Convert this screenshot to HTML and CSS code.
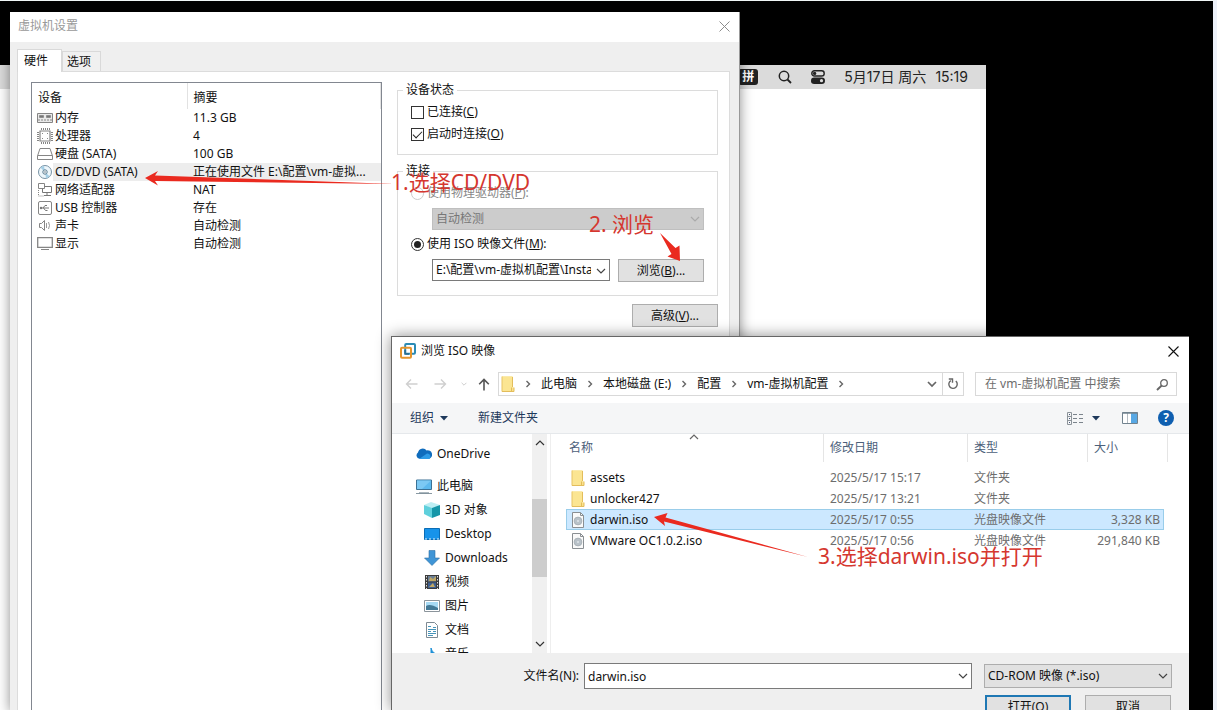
FILE: index.html
```html
<!DOCTYPE html>
<html lang="zh-CN">
<head>
<meta charset="utf-8">
<title>虚拟机设置</title>
<link rel="stylesheet" href="styles.css">
</head>
<body>
<svg class="defs" width="0" height="0" aria-hidden="true">
  <symbol id="chev" viewBox="0 0 10 10"><path d="M1 3l4 4 4-4" fill="none" stroke="currentColor" stroke-width="1.2"/></symbol>
  <symbol id="crumb" viewBox="0 0 6 10"><path d="M1.5 2l3 3-3 3" fill="none" stroke="#666" stroke-width="1.4"/></symbol>
  <symbol id="tri" viewBox="0 0 8 5"><path d="M0 0h8L4 4.5z" fill="currentColor"/></symbol>
  <symbol id="folder" viewBox="0 0 14 16"><path d="M1 .5h10.5v11H13v4H1z" fill="#f9e08a"/><path d="M1 .5h10.5v15H1z" fill="#fbe592"/><path d="M.5 .5h1v15h-1z" fill="#e8c465"/><path d="M10.5 11.5v4h2.5v-4M1 15.5h12M11.5 1v10" fill="none" stroke="#e3bd5b"/></symbol>
  <symbol id="iso" viewBox="0 0 14 16"><path d="M1.5.5h8l3 3v12h-11z" fill="#fafafa" stroke="#8a8f93"/><path d="M9.500.5v3h3" fill="none" stroke="#8a8f93"/><circle cx="7" cy="9" r="3.900" fill="#b9c2c9" stroke="#a3acb3" stroke-width=".8"/><circle cx="7" cy="9" r="1" fill="#dfe4e8"/></symbol>
</svg>

<main class="desktop">
  <section class="guest" aria-label="macOS">
    <div class="menubar">
      <span class="ime">拼</span>
      <svg width="14" height="14" viewBox="0 0 14 14"><circle cx="6" cy="6" r="4.700" fill="none" stroke="#222" stroke-width="1.500"/><path d="M9.500 9.500l3.500 3.500" stroke="#222" stroke-width="1.800"/></svg>
      <svg width="14" height="14" viewBox="0 0 14 14"><rect x=".8" y=".8" width="12.400" height="5.200" rx="2.600" fill="none" stroke="#222" stroke-width="1.400"/><circle cx="3.600" cy="3.400" r="1.700" fill="#222"/><rect y="7.500" width="14" height="6.500" rx="3.200" fill="#222"/><circle cx="10.500" cy="10.700" r="1.600" fill="#dcdcdc"/></svg>
      <time class="clock"><span>5月17日 周六</span><span>15:19</span></time>
    </div>
  </section>

  <section class="window settings" aria-label="虚拟机设置">
    <header class="settings-title">
      <span>虚拟机设置</span>
      <button class="icon-btn" aria-label="关闭"><svg width="11" height="11" viewBox="0 0 11 11"><path d="M.5.5l10 10M10.500.5l-10 10" stroke="#8c8c8c"/></svg></button>
    </header>
    <div class="settings-body">
      <div class="tabs"><button class="tab active">硬件</button><button class="tab">选项</button></div>
      <div class="tabpage">
        <div class="devices">
          <table class="device-table">
            <thead><tr><th class="dcol">设备</th><th>摘要</th></tr></thead>
            <tbody>
              <tr><td><div class="dev"><svg width="16" height="16" viewBox="0 0 16 16"><path d="M.5 3.500h15v9H.5z" fill="#e9e9e9" stroke="#858585"/><path d="M2.500 5.500h4v2h-4zM9.500 5.500h4v2h-4z" fill="#777" stroke="#777" stroke-width=".6"/><path d="M1 10h14" stroke="#858585" stroke-dasharray="2 1"/></svg><span>内存</span></div></td><td>11.3 GB</td></tr>
              <tr><td><div class="dev"><svg width="16" height="16" viewBox="0 0 16 16"><path d="M3 3h10v10H3z" fill="#fff" stroke="#858585" stroke-width="1.200"/><path d="M4 1h9M4 15h9" stroke="#858585" stroke-width="2" stroke-dasharray="1 1"/><path d="M1 4v9M15 4v9" stroke="#858585" stroke-width="2" stroke-dasharray="1 1"/><path d="M5 5h1v1H5zM10 5h1v1h-1zM10 10h1v1h-1zM5 10h1v1H5z" fill="#888"/></svg><span>处理器</span></div></td><td>4</td></tr>
              <tr><td><div class="dev"><svg width="16" height="16" viewBox="0 0 16 16"><path d="M3 2.500h10l2.500 7.500v3.500H.5V10z" fill="#fff" stroke="#858585"/><path d="M1 9.500h14" stroke="#858585"/></svg><span>硬盘 (SATA)</span></div></td><td>100 GB</td></tr>
              <tr class="sel"><td><div class="dev"><svg width="16" height="16" viewBox="0 0 16 16"><circle cx="8" cy="8" r="6.500" fill="#edf6fb" stroke="#7893a5"/><path d="M8 8L3.500 3.800A6 6 0 0 1 7 2zM8 8l4.500 4.200A6 6 0 0 1 9 14z" fill="#a5cfe6"/><circle cx="8" cy="8" r="2.200" fill="#fff" stroke="#55788e"/><circle cx="8" cy="8" r=".7" fill="#35586e"/></svg><span>CD/DVD (SATA)</span></div></td><td>正在使用文件 E:\配置\vm-虚拟...</td></tr>
              <tr><td><div class="dev"><svg width="16" height="16" viewBox="0 0 16 16"><path d="M1.500 1.500h6v5h-6z" fill="none" stroke="#858585"/><path d="M7.500 4.500h7v6h-9v-4M10 10.500v3M7 13.500h7" fill="none" stroke="#777"/><path d="M1.500 8v6h5" fill="none" stroke="#858585" stroke-dasharray="1 1"/></svg><span>网络适配器</span></div></td><td>NAT</td></tr>
              <tr><td><div class="dev"><svg width="16" height="16" viewBox="0 0 16 16"><rect x="1.500" y="1.500" width="13" height="13" rx="1.500" fill="#fff" stroke="#858585"/><path d="M4 8h8M6 8l2-2.500h2M6.500 8l2 2.500h2" fill="none" stroke="#777"/><circle cx="4" cy="8" r="1.200" fill="#777"/></svg><span>USB 控制器</span></div></td><td>存在</td></tr>
              <tr><td><div class="dev"><svg width="16" height="16" viewBox="0 0 16 16"><path d="M2.500 5.500h2l3-3v10l-3-3h-2z" fill="#fff" stroke="#858585"/><path d="M9.500 5v5M11.500 4q2 3.500 0 7" fill="none" stroke="#999"/></svg><span>声卡</span></div></td><td>自动检测</td></tr>
              <tr><td><div class="dev"><svg width="16" height="16" viewBox="0 0 16 16"><path d="M.7 1.700h14.600v9.600H.7z" fill="#fff" stroke="#858585" stroke-width="1.300"/><path d="M4 13.500h8" stroke="#858585"/></svg><span>显示</span></div></td><td>自动检测</td></tr>
            </tbody>
          </table>
        </div>
        <form class="options">
          <fieldset>
            <legend>设备状态</legend>
            <label class="opt"><input type="checkbox"><span>已连接(<u>C</u>)</span></label>
            <label class="opt"><input type="checkbox" checked><span>启动时连接(<u>O</u>)</span></label>
          </fieldset>
          <fieldset class="conn">
            <legend>连接</legend>
            <label class="opt off"><input type="radio" name="src" disabled><span>使用物理驱动器(<u>P</u>):</span></label>
            <div class="combo drive"><select disabled aria-label="物理驱动器"><option>自动检测</option></select><svg width="10" height="10"><use href="#chev"/></svg></div>
            <label class="opt"><input type="radio" name="src" checked><span>使用 ISO 映像文件(<u>M</u>):</span></label>
            <div class="isorow">
              <div class="combo path"><select aria-label="ISO 映像文件"><option>E:\配置\vm-虚拟机配置\Install</option></select><svg width="10" height="10"><use href="#chev"/></svg></div>
              <button type="button" class="btn">浏览(<u>B</u>)...</button>
            </div>
          </fieldset>
          <button type="button" class="btn adv">高级(<u>V</u>)...</button>
        </form>
      </div>
    </div>
  </section>

  <section class="window dialog" aria-label="浏览 ISO 映像">
    <header class="dialog-title">
      <svg width="16" height="16" viewBox="0 0 16 16"><rect x="5.200" y="1" width="9.800" height="9.800" rx="1" fill="none" stroke="#2b8bb5" stroke-width="2"/><rect x="1" y="4.700" width="10" height="10" rx="1" fill="none" stroke="#e5952c" stroke-width="2"/><path d="M5.200 7V10.800H9" fill="none" stroke="#2b6f93" stroke-width="1.800"/></svg>
      <h1>浏览 ISO 映像</h1>
      <button class="icon-btn" aria-label="关闭"><svg width="11" height="11" viewBox="0 0 11 11"><path d="M.5.5l10 10M10.500.5l-10 10" stroke="#111" stroke-width="1.100"/></svg></button>
    </header>
    <nav class="navbar">
      <div class="history">
        <button class="icon-btn" aria-label="后退" disabled><svg width="13" height="12" viewBox="0 0 13 12"><path d="M12.500 6H1.500M6 1.500L1.500 6 6 10.500" fill="none" stroke="#cfcfcf" stroke-width="1.400"/></svg></button>
        <button class="icon-btn" aria-label="前进" disabled><svg width="13" height="12" viewBox="0 0 13 12"><path d="M.5 6h11M7 1.500L11.500 6 7 10.500" fill="none" stroke="#cfcfcf" stroke-width="1.400"/></svg></button>
        <button class="icon-btn" aria-label="最近" disabled><svg class="pale" width="6" height="6"><use href="#chev"/></svg></button>
        <button class="icon-btn" aria-label="向上"><svg width="12" height="13" viewBox="0 0 12 13"><path d="M6 12.500V1.500M1.200 6.300L6 1.500l4.800 4.800" fill="none" stroke="#555" stroke-width="1.600"/></svg></button>
      </div>
      <div class="address">
        <svg width="14" height="16"><use href="#folder"/></svg>
        <svg width="6" height="10"><use href="#crumb"/></svg>
        <a href="#pc">此电脑</a>
        <svg width="6" height="10"><use href="#crumb"/></svg>
        <a href="#e">本地磁盘 (E:)</a>
        <svg width="6" height="10"><use href="#crumb"/></svg>
        <a href="#cfg">配置</a>
        <svg width="6" height="10"><use href="#crumb"/></svg>
        <a href="#vm">vm-虚拟机配置</a>
        <svg width="6" height="10"><use href="#crumb"/></svg>
        <button class="icon-btn drop" aria-label="展开"><svg width="10" height="10" viewBox="0 0 10 10"><path d="M1 3l4 4 4-4" fill="none" stroke="#666" stroke-width="1.700"/></svg></button>
        <button class="icon-btn refresh" aria-label="刷新"><svg width="12" height="12" viewBox="0 0 12 12"><path d="M8.800 3A4.200 4.200 0 1 1 3.800 2.600" fill="none" stroke="#666" stroke-width="1.400"/><path d="M1.800 1h3.700v3.700" fill="none" stroke="#666" stroke-width="1.400"/></svg></button>
      </div>
      <div class="search">
        <input type="text" aria-label="搜索" placeholder="在 vm-虚拟机配置 中搜索">
        <svg width="13" height="13" viewBox="0 0 13 13"><circle cx="8" cy="5" r="3.300" fill="none" stroke="#666" stroke-width="1.300"/><path d="M5.700 7.500L1 12" stroke="#666" stroke-width="1.900"/></svg>
      </div>
    </nav>
    <div class="toolbar">
      <button class="tool">组织<svg width="8" height="5"><use href="#tri"/></svg></button>
      <button class="tool">新建文件夹</button>
      <span class="spacer"></span>
      <button class="tool view" aria-label="视图"><svg width="17" height="13" viewBox="0 0 17 13"><path d="M.5.5h4v12h-4zM.5 4.500h4M.5 8.500h4" fill="none" stroke="#8d949a"/><path d="M2 2.500h1M2 6.500h1M2 10.500h1" stroke="#457"/><path d="M6 2.500h4M12 2.500h4M6 6.500h4M12 6.500h4M6 10.500h4M12 10.500h4" stroke="#7b848c"/></svg><svg width="8" height="5"><use href="#tri"/></svg></button>
      <button class="tool pane" aria-label="预览窗格"><svg width="16" height="12" viewBox="0 0 16 12"><path d="M.5.5h15v11H.5z" fill="#fff" stroke="#71828e"/><path d="M9 1h6v10H9z" fill="#58a8e4"/><path d="M5.500 1v10" stroke="#b5bcc2"/><path d="M.5 1h15" stroke="#71828e" stroke-width="1.500"/></svg></button>
      <button class="help" aria-label="帮助">?</button>
    </div>
    <div class="content">
      <aside class="sidebar">
        <ul class="tree">
          <li class="root first"><svg width="16" height="16" viewBox="0 0 16 16"><path d="M3.500 12.800A3.500 3.500 0 0 1 2 6.500 4.800 4.800 0 0 1 10.600 4.500 4 4 0 0 1 13 12.800z" fill="#0f6cbd"/><path d="M3 13l8-5.500a3.200 3.200 0 0 1 2.500 5.500z" fill="#2e9be6"/></svg>OneDrive</li>
          <li class="root"><svg width="16" height="16" viewBox="0 0 16 16"><path d="M.5 2h15v9.500H.5z" fill="#5db9ee" stroke="#3c7194"/><path d="M1 2.500h14L6 11H1z" fill="#7cc9f4"/><path d="M3 14.800h10M0 15.500h16" stroke="#6b7f8b" stroke-width=".8"/></svg>此电脑</li>
          <li><svg width="16" height="16" viewBox="0 0 16 16"><path d="M0 3l7-3 9 3-7 4z" fill="#bdeef3"/><path d="M0 3l8 3v10l-8-4z" fill="#5fd0dc"/><path d="M16 3L8 6v10l8-3z" fill="#1596a8"/></svg>3D 对象</li>
          <li><svg width="16" height="16" viewBox="0 0 16 16"><path d="M.5 2.500h15v11H.5z" fill="#1793ea" stroke="#0b6db5"/><path d="M1 13h14" stroke="#eaf6ff" stroke-dasharray="2 2"/></svg>Desktop</li>
          <li><svg width="16" height="16" viewBox="0 0 16 16"><path d="M5 .5h6V8h4.500L8 15.500.5 8H5z" fill="#3f95d6" stroke="#2b6fa5" stroke-width=".6"/></svg>Downloads</li>
          <li><svg width="16" height="16" viewBox="0 0 16 16"><path d="M1 1h14v14H1z" fill="#3c3c3c"/><path d="M4 2h8v5.500H4z" fill="#6a7f96"/><path d="M4 8.500h8V14H4z" fill="#3e5f91"/><path d="M6 3l3 2 3-3v5H5zM7 11l2-2 2 4H5z" fill="#c0a866"/><path d="M2.500 2v13M13.500 2v13" stroke="#ddd" stroke-dasharray="1.500 1.500"/></svg>视频</li>
          <li><svg width="16" height="16" viewBox="0 0 16 16"><path d="M.5 2.500h15v11H.5z" fill="#fff" stroke="#8b949b"/><path d="M2 4h12v8H2z" fill="#a7daf4"/><path d="M2 8q4-3 12 2v2H2z" fill="#447a97"/></svg>图片</li>
          <li><svg width="16" height="16" viewBox="0 0 16 16"><path d="M2.500.5h8l3 3v12h-11z" fill="#fff" stroke="#7e8a93"/><path d="M4 4.500h3M9 5.500h3M4 7.500h8M4 9.500h3M9 9.500h3M4 11.500h8M4 13.500h5" stroke="#4694ba"/></svg>文档</li>
          <li><svg width="16" height="16" viewBox="0 0 16 16"><path d="M7 2q0 3 4.500 6-1 2-2-1L8.500 13H7z" fill="#1c8fd6" stroke="#1c8fd6"/><circle cx="6" cy="13" r="2.500" fill="#1c8fd6"/></svg>音乐</li>
        </ul>
        <div class="scroll"><svg class="flip" width="10" height="10"><use href="#chev"/></svg><span class="thumb"></span><svg width="10" height="10"><use href="#chev"/></svg></div>
      </aside>
      <div class="files">
        <table class="file-table">
          <thead><tr><th>名称<svg class="sort" width="10" height="10"><use href="#chev"/></svg></th><th class="c-date">修改日期</th><th class="c-type">类型</th><th class="c-size">大小</th></tr></thead>
          <tbody>
            <tr><td><div class="fname"><svg width="14" height="16"><use href="#folder"/></svg>assets</div></td><td>2025/5/17 15:17</td><td>文件夹</td><td></td></tr>
            <tr><td><div class="fname"><svg width="14" height="16"><use href="#folder"/></svg>unlocker427</div></td><td>2025/5/17 13:21</td><td>文件夹</td><td></td></tr>
            <tr class="sel"><td><div class="fname"><svg width="14" height="16"><use href="#iso"/></svg>darwin.iso</div></td><td>2025/5/17 0:55</td><td>光盘映像文件</td><td>3,328 KB</td></tr>
            <tr><td><div class="fname"><svg width="14" height="16"><use href="#iso"/></svg>VMware OC1.0.2.iso</div></td><td>2025/5/17 0:56</td><td>光盘映像文件</td><td>291,840 KB</td></tr>
          </tbody>
        </table>
      </div>
    </div>
    <footer class="footer">
      <label class="flabel" for="fname">文件名(N):</label>
      <div class="combo file"><input id="fname" type="text" value="darwin.iso"><svg width="10" height="10"><use href="#chev"/></svg></div>
      <div class="combo type"><select aria-label="文件类型"><option>CD-ROM 映像 (*.iso)</option></select><svg width="10" height="10"><use href="#chev"/></svg></div>
      <div class="actions"><button class="btn primary">打开(O)</button><button class="btn">取消</button></div>
    </footer>
  </section>

  <svg class="marks" width="1217" height="710" viewBox="0 0 1217 710" aria-hidden="true">
    <path d="M145 178l13-7-3 4.500L395 184l-240-3 3 4.500z" fill="#ea2a1f"/>
    <path d="M660 233l15.500 15 4-2.500 .5 15.500-12.500-4.500 4-2.500z" fill="#ea2a1f"/>
    <path d="M654 517l13.500-4-2 4.500L808 557 664 521.500l1 4.500z" fill="#ea2a1f"/>
  </svg>
  <p class="note n1">1.选择CD/DVD</p>
  <p class="note n2">2. 浏览</p>
  <p class="note n3">3.选择darwin.iso并打开</p>
</main>
</body>
</html>
```

FILE: styles.css
```css
* { box-sizing: border-box; }
body, button, input, select {
  font: 12px/16px "Noto Sans", "Noto Sans CJK SC", sans-serif;
  color: #111;
}
body { margin: 0; background: #edf1f9; }
button, input, select { margin: 0; }
p, h1, ul { margin: 0; padding: 0; }
svg { flex: none; display: block; }
.defs { position: absolute; }
.icon-btn { border: 0; padding: 0; background: none; display: flex; align-items: center; justify-content: center; }

.desktop {
  position: relative;
  height: 100vh;
  overflow: hidden;
  background: #000;
  border-top: 1px solid #f0f6f6;
  border-right: 4px solid #edf1f9;
}

/* Guest screen */
.guest { position: absolute; left: 0; right: 227px; top: 64px; bottom: 0; background: #fff; }
.menubar {
  height: 24px;
  background: #dbdbdb;
  display: flex;
  align-items: center;
  justify-content: flex-end;
  gap: 19px;
  padding-right: 18px;
}
.ime { background: #222; color: #fff; border-radius: 3px; padding: 0 4px; font-weight: 700; margin-right: 1px; }
.clock { display: flex; gap: 9px; font: 14px/18px Inter, "Noto Sans CJK SC", sans-serif; color: #222; }

.window { position: absolute; display: flex; flex-direction: column; }

/* Settings window */
.settings {
  left: 10px; right: 473px; top: 11px; bottom: 0;
  background: #efefef;
  border-right: 1px solid #999;
  box-shadow: 0 2px 12px rgba(0, 0, 0, .45);
}
.settings-title {
  height: 30px;
  background: #fff;
  color: #999;
  display: flex;
  align-items: center;
  justify-content: space-between;
  padding: 0 9px 2px 8px;
}
.settings-body { flex: 1; display: flex; flex-direction: column; padding: 7px 9px 0 7px; }
.tabs { display: flex; align-items: flex-end; height: 22px; }
.tab { border: 1px solid #d9d9d9; border-bottom: 0; background: #f0f0f0; height: 20px; width: 39px; padding: 0 5px 0 0; }
.tab.active { background: #fff; height: 23px; width: 45px; padding: 0 7px 0 0; position: relative; margin-bottom: -1px; }
.tabpage {
  flex: 1;
  background: #fff;
  border: 1px solid #dcdcdc;
  border-bottom: 0;
  display: flex;
  gap: 15px;
  padding: 10px 11px 0 13px;
}
.devices { flex: 1; border: 1px solid #828790; border-bottom: 0; }
.device-table { width: 100%; border-collapse: collapse; table-layout: fixed; }
.device-table th { text-align: left; font-weight: 400; height: 26px; padding: 4px 6px 0; border-right: 1px solid #e2e2e2; }
.dcol { width: 155px; }
.device-table td { height: 18px; padding: 0 0 0 6px; line-height: 18px; white-space: nowrap; }
.device-table td:first-child { padding-left: 5px; }
.dev { display: flex; align-items: center; }
.dev span { flex: 1; padding-left: 2px; }
.sel .dev span, .device-table .sel td:last-child { background: #ededed; }

.options { width: 321px; display: flex; flex-direction: column; }
fieldset { border: 1px solid #dcdcdc; margin: 0 0 8px; padding: 3px 13px 9px; min-width: 0; }
legend { padding: 0 3px; margin-left: -8px; line-height: 16px; }
.opt { display: flex; align-items: center; height: 22px; gap: 3px; }
.opt input { appearance: none; width: 13px; height: 13px; border: 1px solid #333; background: #fff; }
.opt input[type="checkbox"]:checked::after {
  content: ""; display: block; width: 8px; height: 4px; margin: 2px 1px;
  border: solid #222; border-width: 0 0 1px 1px; rotate: -45deg;
}
.opt input[type="radio"] { border-radius: 50%; }
.opt input[type="radio"]:checked::after { content: ""; display: block; width: 7px; height: 7px; margin: 2px; border-radius: 50%; background: #222; }
.off { color: #888; }
.opt.off input { border-color: #ccc; }
.conn { padding-bottom: 13px; margin-bottom: 8px; }
.conn .off { margin-bottom: 4px; }

.combo { position: relative; display: flex; }
.combo select, .combo input {
  appearance: none; width: 100%; height: 22px; border: 1px solid #7a7a7a; border-radius: 0;
  background: #fff; padding: 0 18px 0 3px; outline: 0;
}
.combo svg { position: absolute; right: 4px; top: 50%; translate: 0 -50%; color: #444; }
.combo.drive { margin: 0 0 3px 21px; }
.combo.drive select { background: #ccc; border-color: #bfbfbf; color: #777; opacity: 1; }
.combo.drive svg { color: #aaa; }
.isorow { display: flex; gap: 8px; margin: 4px 0 0 21px; }
.path { flex: 1; min-width: 0; }
.btn { height: 23px; width: 86px; background: #e1e1e1; border: 1px solid #adadad; padding: 0; }
.adv { align-self: flex-end; }

/* File dialog */
.dialog {
  left: 391px; right: 24px; top: 335px; bottom: 0;
  background: #fff;
  border: 1px solid #666;
  border-width: 1px 0 0 1px;
  box-shadow: 0 0 14px rgba(0, 0, 0, .45);
}
.dialog-title, .navbar, .toolbar, .content { flex: none; }
.dialog-title { display: flex; align-items: center; height: 30px; padding: 0 10px 2px 8px; gap: 5px; }
.dialog-title h1 { flex: 1; font-size: 12px; font-weight: 400; }
.navbar { display: flex; align-items: center; gap: 11px; padding: 5px 12px 7px 13px; }
.history { display: flex; align-items: center; gap: 16px; margin-right: -3px; }
.pale { color: #bbb; }
.history .icon-btn:nth-child(3) { margin: 0 -5px 0 -2px; }
.address { flex: 1; display: flex; align-items: center; height: 24px; border: 1px solid #d9d9d9; padding-left: 2px; gap: 10px; }
.address a { color: #111; text-decoration: none; white-space: nowrap; }
.drop { margin-left: auto; margin-right: -5px; }
.refresh { width: 21px; align-self: stretch; border-left: 1px solid #d9d9d9; }
.search { width: 202px; height: 24px; border: 1px solid #d9d9d9; display: flex; align-items: center; padding: 0 7px 0 9px; }
.search input { flex: 1; min-width: 0; border: 0; padding: 0; outline: 0; background: none; }
.search input::placeholder { color: #6d6d6d; opacity: 1; }
.toolbar { display: flex; align-items: center; height: 31px; background: #f5f6f7; border-bottom: 1px solid #e5e8eb; padding: 0 15px 0 18px; }
.tool { border: 0; background: none; padding: 0; color: #1e395b; display: flex; align-items: center; gap: 6px; margin-right: 30px; }
.spacer { flex: 1; }
.view { gap: 8px; margin-right: 22px; }
.pane { margin-right: 20px; }
.help { width: 16px; height: 16px; border: 0; border-radius: 50%; background: #0f5fb0; color: #fff; font-weight: 700; padding: 0; }

.content { display: flex; height: 219px; }
.sidebar { width: 159px; display: flex; border-right: 1px solid #eee; padding-right: 3px; overflow: hidden; }
.tree { flex: 1; list-style: none; padding-top: 8px; }
.tree li { display: flex; align-items: center; height: 24px; gap: 5px; padding-left: 32px; }
.tree .root { padding-left: 24px; }
.tree .first { margin-bottom: 8px; }
.scroll { width: 15px; background: #f0f0f0; display: flex; flex-direction: column; align-items: center; padding: 4px 0; color: #333; }
.thumb { width: 15px; height: 78px; background: #cdcdcd; margin: 51px 0 auto; }
.flip { rotate: 180deg; }
.files { flex: 1; padding: 0 25px 0 15px; }
.file-table { width: 100%; border-collapse: separate; border-spacing: 0; table-layout: fixed; color: #6d6d6d; }
.file-table th { position: relative; text-align: left; font-weight: 400; height: 28px; padding: 0 3px; color: #4c607a; }
.file-table th + th { padding-left: 6px; border-left: 1px solid #e5e5e5; }
.file-table th:last-child::after { content: ""; position: absolute; top: 0; bottom: 0; right: -4px; border-right: 1px solid #e5e5e5; }
.sort { position: absolute; top: -2px; left: 50%; translate: -6px 0; rotate: 180deg; color: #666; }
.c-date { width: 144px; }
.c-type { width: 120px; }
.c-size { width: 77px; }
.file-table tbody::before { content: ""; display: block; height: 5px; }
.file-table td { height: 21px; padding: 0 0 0 7px; border: solid transparent; border-width: 1px 0; line-height: 18px; }
.file-table td:first-child { padding-left: 5px; color: #111; }
.file-table td:last-child { text-align: right; padding: 0 4px 0 0; }
.file-table .sel td { background: #cce8ff; border-color: #99cdea; }
.file-table .sel td:first-child { border-left-width: 1px; padding-left: 4px; }
.file-table .sel td:last-child { border-right-width: 1px; padding-right: 3px; }
.fname { display: flex; align-items: center; gap: 5px; }

.footer {
  flex: 1;
  background: #efefef;
  display: grid;
  grid-template-columns: 188px 1fr 188px;
  grid-auto-rows: max-content;
  align-items: center;
  column-gap: 12px;
  row-gap: 6px;
  padding: 10px 17px 0 0;
}
.flabel { text-align: right; margin-right: 1px; }
.file { margin-left: -8px; }
.file input { height: 26px; }
.combo.type select { height: 24px; background: #e1e1e1; border-color: #adadad; }
.actions { grid-column: 3; display: flex; justify-content: space-between; padding: 0 1px; }
.primary { border: 2px solid #1f78b4; }

/* Annotations */
.marks { position: absolute; left: 0; top: -1px; pointer-events: none; }
.note { position: absolute; font-size: 21px; line-height: 24px; color: #d5372f; white-space: nowrap; }
.n1 { left: 391px; top: 169px; }
.n2 { left: 589px; top: 211px; }
.n3 { left: 818px; top: 543px; }
```
